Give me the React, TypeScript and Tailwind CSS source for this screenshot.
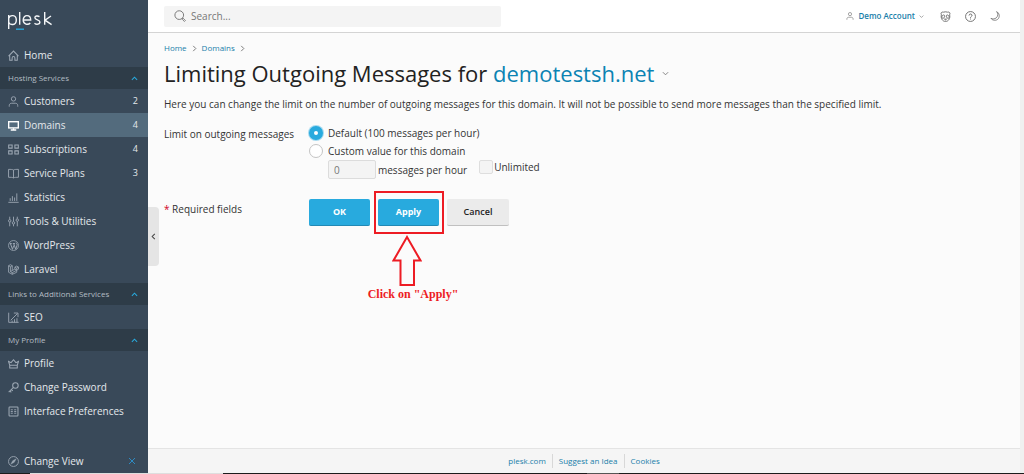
import { useState, type ReactNode } from "react";

function Icon({ children, className = "size-3" }: { children: ReactNode; className?: string }) {
  return (
    <svg
      viewBox="0 0 16 16"
      fill="none"
      stroke="currentColor"
      strokeWidth="1.3"
      aria-hidden="true"
      className={`shrink-0 ${className}`}
    >
      {children}
    </svg>
  );
}

const icons = {
  home: <path d="M.8 8.800 8 1.500l7.200 7.300M2.500 7.300V15h3.500v-3.500a2 2 0 0 1 4 0V15h3.500V7.300" strokeWidth="1.500" />,
  user: (
    <>
      <circle cx="8" cy="4.200" r="3.200" />
      <path d="M1.800 15.500V14c0-2.200 1.500-3.500 3.500-3.500h5.400c2 0 3.500 1.300 3.500 3.500v1.500" />
    </>
  ),
  screen: (
    <>
      <rect x="1" y="2.500" width="14" height="9" strokeWidth="2" />
      <path d="M4 14.500h8M8 12v2" strokeWidth="2" />
    </>
  ),
  grid: (
    <path d="M1 1.500h5v4.500H1zM10 1.500h5v4.500h-5zM1 10h5v4.500H1zM10 10h5v4.500h-5z" strokeWidth="1.500" />
  ),
  book: <path d="M8 3v11.500M8 3C6.500 2 4 2 .8 2v11.500c3.200 0 5.700 0 7.200 1 1.500-1 4-1 7.200-1V2C12 2 9.500 2 8 3z" />,
  stats: <path d="M.5 15h15M3.200 9v4M6.400 6v7M9.600 8v5M12.800 2v11" />,
  sliders: (
    <>
      <path d="M2.500 1v4M2.500 9v6M8 1v7M8 12v3M13.500 1v3M13.500 8v7" />
      <circle cx="2.500" cy="7" r="1.800" />
      <circle cx="8" cy="10" r="1.800" />
      <circle cx="13.500" cy="6" r="1.800" />
    </>
  ),
  wordpress: (
    <>
      <circle cx="8" cy="8" r="7.200" strokeWidth="1.200" />
      <path d="M2.500 5.200h3M7 5.200h3.300M3.500 5.200l3 8.300L8.300 8M8.300 5.200l2.900 8.300 2-6c.4-1.400-.8-2.200-1.500-3.500" strokeWidth="1.400" />
    </>
  ),
  laravel: (
    <path
      d="M.8 2.500 3.500 1l2.700 1.500v7L10 7.300V4.500l2.700-1.500 2.600 1.500v3l-2.600 1.500v3L6.200 15 .8 12zM.8 2.500 3.500 4v7l2.700-1.500M3.500 4l2.700-1.500M10 4.500 12.700 6l2.600-1.500M12.700 6v3L10 7.500M3.500 11l2.700 1.600 6.500-3.600M6.200 12.600V15"
      strokeWidth="1.200"
    />
  ),
  seo: <path d="M1 1v14h14.500M4 12l9.500-9.500M8.500 1.500H14.500V7.500M6 12.500v2.500M9.500 10.500V15M13 9v6" />,
  crown: <path d="M2.500 10.500.8 5l3.700 1.800L8 2.500l3.500 4.300L15.200 5l-1.700 5.500zM2.500 10.500V14.500h11v-4" strokeWidth="1.500" />,
  key: (
    <>
      <circle cx="10.800" cy="5.200" r="4" strokeWidth="1.500" />
      <path d="M7.800 8 1 14.800M2.800 13l2 2M5 10.800l2 2" strokeWidth="1.500" />
    </>
  ),
  prefs: (
    <>
      <rect x="1.500" y="1.500" width="13" height="13" rx="1" strokeWidth="1.500" />
      <path d="M4 5.500h3M9 5.500h3M4 8h3M9 8h3M4 10.500h3M9 10.500h3" />
    </>
  ),
  compass: (
    <>
      <circle cx="8" cy="8" r="7.200" />
      <path d="m12 4-2.800 5.200L4 12l2.800-5.200z" fill="currentColor" strokeWidth=".5" />
    </>
  ),
  up: <path d="m2 11 6-6 6 6" strokeWidth="2.400" />,
  down: <path d="m2 5 6 6 6-6" strokeWidth="2" />,
  left: <path d="m11 2-6 6 6 6" strokeWidth="2.400" />,
  right: <path d="m5 2 6 6-6 6" strokeWidth="2.200" />,
  close: <path d="m2 2 12 12M14 2 2 14" strokeWidth="1.800" />,
  search: (
    <>
      <circle cx="7" cy="6.800" r="5.800" strokeWidth="1.300" />
      <path d="m11 10.800 1.200 1.200M12.200 11l3 3-1.300 1.300-3-3z" strokeWidth="1.200" />
    </>
  ),
  panda: (
    <>
      <path d="M2 5.500C.6 3.500 2.200.6 5 1.700c2-.7 4-.7 6 0 2.800-1.100 4.400 1.800 3 3.800" />
      <path d="M2 5.500C.8 10.500 3.500 15.200 8 15.200s7.200-4.700 6-9.700" />
      <path d="M2.600 9c0-2 1.800-3.600 3.300-3.200 1.400.4 1 3-.2 4.200s-3 .8-3.100-1zM13.400 9c0-2-1.800-3.600-3.300-3.200-1.400.4-1 3 .2 4.200s3 .8 3.100-1zM6.500 11.800h3L8 13z" />
    </>
  ),
  help: (
    <>
      <circle cx="8" cy="8" r="7.200" strokeWidth="1.300" />
      <path d="M5.900 6.500c0-2.800 4.300-2.800 4.300 0C10.200 8 8 8 8 9.800M8 11v1.300" strokeWidth="1.400" />
    </>
  ),
  moon: <path d="M10.500 1c3 2.500 2.500 7.500-.5 10-2.500 2-5.800 2-8.500.8 3 4 9 4 11.800.5C16 8.800 15 3 10.500 1z" strokeWidth="1.200" />,
};

type NavItem = { icon: keyof typeof icons; label: string; count?: number; active?: boolean };

const sections: { title: string; items: NavItem[] }[] = [
  {
    title: "Hosting Services",
    items: [
      { icon: "user", label: "Customers", count: 2 },
      { icon: "screen", label: "Domains", count: 4, active: true },
      { icon: "grid", label: "Subscriptions", count: 4 },
      { icon: "book", label: "Service Plans", count: 3 },
      { icon: "stats", label: "Statistics" },
      { icon: "sliders", label: "Tools & Utilities" },
      { icon: "wordpress", label: "WordPress" },
      { icon: "laravel", label: "Laravel" },
    ],
  },
  { title: "Links to Additional Services", items: [{ icon: "seo", label: "SEO" }] },
  {
    title: "My Profile",
    items: [
      { icon: "crown", label: "Profile" },
      { icon: "key", label: "Change Password" },
      { icon: "prefs", label: "Interface Preferences" },
    ],
  },
];

function NavLink({ icon, label, count, active }: NavItem) {
  return (
    <a
      href="#"
      aria-current={active ? "page" : undefined}
      className={`flex h-6 items-center gap-[5px] pr-2.5 pl-2 text-[#e4e8ec] ${active ? "bg-[#536b7d]" : ""}`}
    >
      <Icon className={active ? "size-[11px] text-white" : "size-[11px] text-[#9ea9b5]"}>{icons[icon]}</Icon>
      <span>{label}</span>
      {count !== undefined && <span className="ml-auto text-[9px]">{count}</span>}
    </a>
  );
}

function Sidebar() {
  return (
    <nav className="flex w-[148px] shrink-0 flex-col bg-[#394959]">
      <a href="#" aria-label="plesk" className="flex h-[43px] px-2 pt-2.5">
        <svg viewBox="0 0 44 20" className="h-5 w-11" fill="none" stroke="#f4f6f8" strokeWidth="1.400" aria-hidden="true">
          <path d="M.7 5v14" />
          <path d="M.7 8C2 4.800 8.300 4.200 8.300 10S2 15.300.7 12.500" />
          <path d="M11.700 2v12.800" />
          <path d="M15.200 10h7.500c0-5.800-7.500-6-7.500.1 0 4.600 5 5.100 7.100 2.900" />
          <path d="M31.500 6.700c-1.800-1.200-4.600-1-4.600 1 0 2.600 5 1.700 5 4.300 0 2.700-3.700 2.700-5.400 1.200" />
          <path d="M36.700 2v12.800M43 6l-6 4.200 6.600 4.500" />
          <path d="M8 19.200h8" stroke="#28aade" strokeWidth="1.400" />
        </svg>
      </a>
      <NavLink icon="home" label="Home" />
      {sections.map((section) => (
        <section key={section.title}>
          <button
            type="button"
            className="flex h-[22px] w-full items-center justify-between bg-[#2e3c48] pr-2.5 pl-2 text-[8px] text-[#b4bcc4]"
          >
            {section.title}
            <Icon className="size-[7px] text-[#28aade]">{icons.up}</Icon>
          </button>
          <div className={section.items.length > 4 ? "pb-0.5" : ""}>
            {section.items.map((item) => (
              <NavLink key={item.label} {...item} />
            ))}
          </div>
        </section>
      ))}
      <div className="mt-auto flex items-center pr-3">
        <div className="grow">
          <NavLink icon="compass" label="Change View" />
        </div>
        <button type="button" aria-label="Close" className="text-[#2b93cf]">
          <Icon className="size-2">{icons.close}</Icon>
        </button>
      </div>
    </nav>
  );
}

function TopBar() {
  return (
    <header className="flex h-[33px] items-center justify-between border-b border-[#d4d4d4] bg-white pr-5 pl-4">
      <label className="flex h-[21px] w-[337px] items-center gap-[5px] rounded-xs bg-[#f4f4f4] px-2.5 text-[#777]">
        <Icon>{icons.search}</Icon>
        <input
          type="search"
          aria-label="Search"
          placeholder="Search..."
          className="w-full bg-transparent text-[#222] outline-none placeholder:text-[#777]"
        />
      </label>
      <div className="flex items-center text-[#666]">
        <button type="button" className="mr-4 flex items-center gap-1 text-[8px] font-semibold text-[#1a80aa]">
          <Icon className="size-2 text-[#777]">{icons.user}</Icon>
          Demo Account
          <Icon className="size-[5px] text-[#777]">{icons.down}</Icon>
        </button>
        <div className="flex gap-3.5">
          <button type="button" aria-label="Plesk community">
            <Icon className="size-[11px]">{icons.panda}</Icon>
          </button>
          <button type="button" aria-label="Help">
            <Icon className="size-[11px]">{icons.help}</Icon>
          </button>
          <button type="button" aria-label="Dark mode">
            <Icon className="size-2.5">{icons.moon}</Icon>
          </button>
        </div>
      </div>
    </header>
  );
}

const radioBase =
  "size-3.5 shrink-0 appearance-none rounded-full border border-[#c4c4c4] bg-white checked:border-[5px] checked:border-[#28aade] checked:ring-1 checked:ring-[#a5daf0]";

function LimitForm() {
  const [mode, setMode] = useState("default");
  const primary =
    "h-[27px] w-[61px] rounded-xs border-b border-[#2289b5] bg-[#28aade] text-[9px] font-bold text-white";
  return (
    <form onSubmit={(event) => event.preventDefault()}>
      <fieldset className="flex pt-3">
        <legend className="float-left w-[145px] pt-1">Limit on outgoing messages</legend>
        <div>
          <label className="flex h-[19px] items-center gap-[5px]">
            <input
              type="radio"
              name="limit"
              className={radioBase}
              checked={mode === "default"}
              onChange={() => setMode("default")}
            />
            Default (100 messages per hour)
          </label>
          <label className="flex h-[18px] items-center gap-[5px]">
            <input
              type="radio"
              name="limit"
              className={radioBase}
              checked={mode === "custom"}
              onChange={() => setMode("custom")}
            />
            Custom value for this domain
          </label>
          <div className="flex items-start pl-[19px]">
            <label className="flex items-center gap-0.5">
              <input
                type="text"
                defaultValue="0"
                disabled={mode === "default"}
                className="h-[19px] w-12 rounded-xs border border-[#dcdcdc] bg-[#f4f4f4] px-[5px] text-[#777]"
              />
              messages per hour
            </label>
            <label className="ml-3 flex h-3.5 items-center gap-px">
              <input
                type="checkbox"
                disabled={mode === "default"}
                className="size-3.5 appearance-none rounded-xs border border-[#dedede] bg-[#f4f4f4]"
              />
              Unlimited
            </label>
          </div>
        </div>
      </fieldset>
      <div className="flex pt-5">
        <p className="w-[145px] pt-[3px]">
          <span className="text-[#d0021b]">*</span> Required fields
        </p>
        <div className="flex gap-2">
          <button type="submit" className={primary}>
            OK
          </button>
          <div className="relative">
            <button type="button" className={primary}>
              Apply
            </button>
            <div className="pointer-events-none absolute -top-2 -left-1 flex w-[70px] flex-col items-center text-[#ed1c24]">
              <div className="h-[43px] w-full border-2 border-current" />
              <svg viewBox="0 0 30 52" className="mt-px mr-1 h-[52px] w-[30px]" fill="none" stroke="currentColor" strokeWidth="2" aria-hidden="true">
                <path d="M15 2 28.500 25.500H22V50H8.500V25.500H1.500z" />
              </svg>
              <span className="ml-2 font-['Liberation_Serif',serif] text-[12px] leading-[14px] font-bold whitespace-nowrap">
                Click on "Apply"
              </span>
            </div>
          </div>
          <button
            type="button"
            className="h-[27px] w-[62px] rounded-xs border-b border-[#c0c0c0] bg-[#ebebeb] text-[9px] font-semibold text-[#222]"
          >
            Cancel
          </button>
        </div>
      </div>
    </form>
  );
}

function Footer() {
  return (
    <footer className="flex h-[25px] items-center justify-center border-t border-[#e4e4e4] bg-[#f5f5f5] text-[8px] text-[#1a80aa]">
      <a href="#" className="px-1.5">plesk.com</a>
      <a href="#" className="border-l border-[#d8d8d8] px-1.5">Suggest an Idea</a>
      <a href="#" className="border-l border-[#d8d8d8] px-1.5">Cookies</a>
    </footer>
  );
}

export default function App() {
  return (
    <div className="flex min-h-screen flex-col font-['Open_Sans','Noto_Sans',sans-serif] text-[10px] leading-[14px] text-[#333]">
      <div className="flex grow">
        <Sidebar />
        <div className="relative flex min-w-0 grow flex-col bg-[#fbfbfb]">
          <TopBar />
          <button
            type="button"
            aria-label="Collapse menu"
            className="absolute top-[207px] left-0 flex h-[59px] w-[11px] items-center justify-center rounded-r-sm bg-[#e5e5e5] text-[#444]"
          >
            <Icon className="size-[7px]">{icons.left}</Icon>
          </button>
          <main className="grow px-4 pt-2">
            <div className="flex items-center gap-1 text-[8px] text-[#1a80aa]">
              <a href="#">Home</a>
              <Icon className="size-[7px] text-[#777]">{icons.right}</Icon>
              <a href="#">Domains</a>
              <Icon className="size-[7px] text-[#777]">{icons.right}</Icon>
            </div>
            <h1 className="flex items-center gap-2 pt-1 text-[22px] leading-7 text-[#222]">
              <span>
                Limiting Outgoing Messages for <a href="#" className="text-[#0b83b3]">demotestsh.net</a>
              </span>
              <Icon className="size-[7px] text-[#777]">{icons.down}</Icon>
            </h1>
            <p className="pt-2.5">
              Here you can change the limit on the number of outgoing messages for this domain. It will not be possible
              to send more messages than the specified limit.
            </p>
            <LimitForm />
          </main>
          <Footer />
        </div>
        <div className="w-1 shrink-0 bg-[#f0f0f0]" />
      </div>
      <div className="flex h-px bg-[#1c1c1c]">
        <div className="ml-[30px] w-[193px] bg-[#dedede]" />
        <div className="ml-[364px] w-8 bg-[#555]" />
      </div>
    </div>
  );
}
